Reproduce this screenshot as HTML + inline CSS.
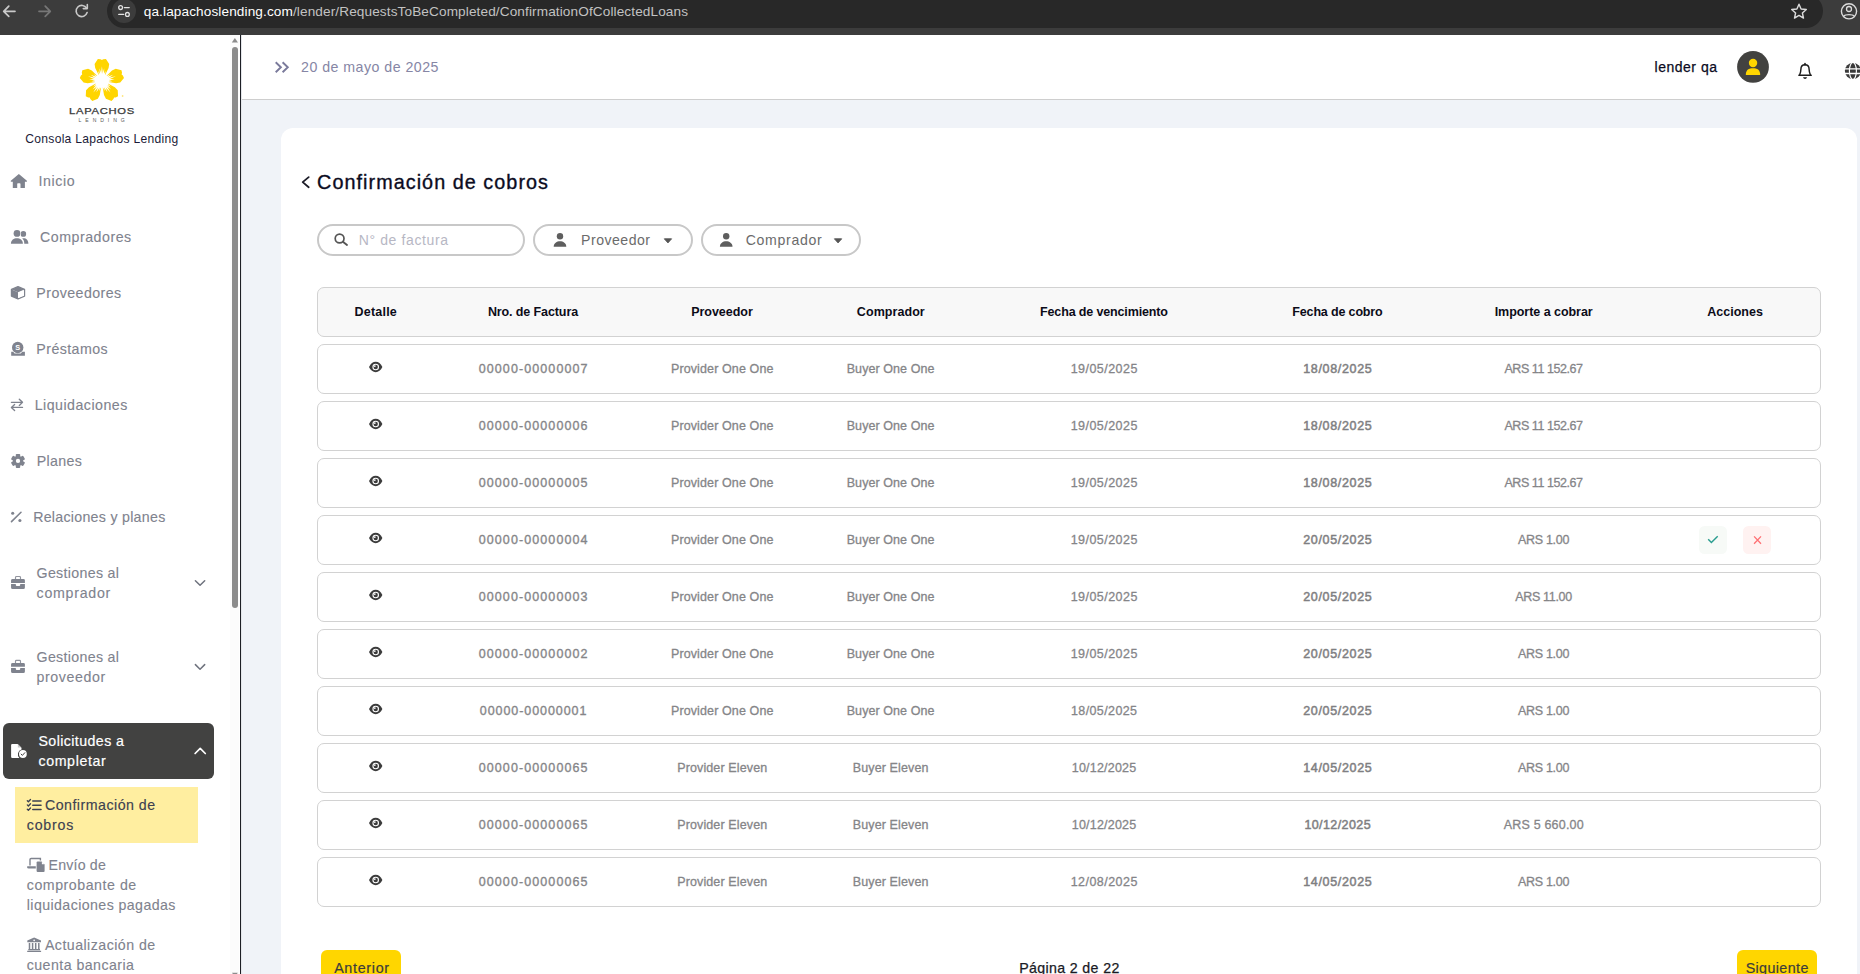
<!DOCTYPE html>
<html lang="es">
<head>
<meta charset="utf-8">
<title>Confirmación de cobros</title>
<style>
*{box-sizing:border-box;margin:0;padding:0}
html,body{width:1860px;height:974px;overflow:hidden}
body{position:relative;background:#f0f3f8;font-family:"Liberation Sans",sans-serif}
.t{position:absolute;white-space:pre;display:block}
.b{position:absolute;display:block}
svg{position:absolute;display:block;overflow:visible}
.row{position:absolute;left:317px;width:1504px;height:50px;border:1px solid #d2d2d2;border-radius:7px;background:#fff}
</style>
</head>
<body>
<div class="b" style="left:0;top:0;width:1860px;height:35px;background:#3c3c3c"></div>
<div class="b" style="left:107px;top:-6px;width:1716px;height:34px;border-radius:17px;background:#282828"></div>
<div class="b" style="left:112px;top:-1px;width:24px;height:24px;border-radius:12px;background:#3c3c3c"></div>
<svg style="left:0;top:0" width="1860" height="35" viewBox="0 0 1860 35" fill="none" stroke-linecap="round" stroke-linejoin="round">
<path d="M15 11.3H3.9M8.8 6.2L3.7 11.3L8.8 16.4" stroke="#c9c9c9" stroke-width="1.7"/>
<path d="M39 11.3H50.1M45.2 6.2L50.3 11.3L45.2 16.4" stroke="#777" stroke-width="1.7"/>
<path d="M86.6 8.2A5.6 5.6 0 1 0 87.1 12.6" stroke="#c9c9c9" stroke-width="1.6"/>
<path d="M87.3 4.6V8.6H83.3" stroke="#c9c9c9" stroke-width="1.6"/>
<circle cx="120.6" cy="7.6" r="1.9" stroke="#e3e3e3" stroke-width="1.3"/><path d="M124.4 7.6H129.2" stroke="#e3e3e3" stroke-width="1.4"/>
<circle cx="127.4" cy="14.4" r="1.9" stroke="#e3e3e3" stroke-width="1.3"/><path d="M118.8 14.4H123.6" stroke="#e3e3e3" stroke-width="1.4"/>
<path d="M1799 4.2L1801.1 9L1806.3 9.5L1802.4 13L1803.5 18.1L1799 15.4L1794.5 18.1L1795.6 13L1791.7 9.5L1796.9 9Z" stroke="#dcdcdc" stroke-width="1.4"/>
<circle cx="1849" cy="11.3" r="7.6" stroke="#dcdcdc" stroke-width="1.4"/>
<circle cx="1849" cy="9" r="2.5" stroke="#dcdcdc" stroke-width="1.3"/>
<path d="M1843.6 16.3C1845.3 14.2 1852.7 14.2 1854.4 16.3" stroke="#dcdcdc" stroke-width="1.3"/>
</svg>
<span class="t" style="left:143.78px;top:2.19px;font-size:13.60px;line-height:20px;color:#c2c2c2;letter-spacing:0.117px;"><span style="color:#fff">qa.lapachoslending.com</span>/lender/RequestsToBeCompleted/ConfirmationOfCollectedLoans</span>
<div class="b" style="left:0;top:35px;width:240px;height:939px;background:#fff"></div>
<div class="b" style="left:230px;top:35px;width:9px;height:939px;background:#fcfcfc"></div>
<div class="b" style="left:232px;top:47px;width:6px;height:561px;border-radius:3px;background:#8c8c8c"></div>
<svg style="left:230px;top:35px" width="10" height="939" viewBox="0 0 10 939"><path d="M1.8 7.4L4.9 3L8 7.4Z" fill="#8c8c8c"/><path d="M2 937.8L4.9 942L7.8 937.8Z" fill="#8c8c8c"/></svg>
<div class="b" style="left:240px;top:35px;width:1px;height:939px;background:#1d1f25"></div>
<div class="b" style="left:241px;top:35px;width:1px;height:939px;background:#e4e6ea;z-index:3"></div>
<div class="b" style="left:241px;top:35px;width:1619px;height:65px;background:#fff;border-bottom:1px solid #cecece"></div>
<svg style="left:241px;top:35px" width="1619" height="64" viewBox="241 35 1619 64" fill="none" stroke-linecap="round" stroke-linejoin="round">
<path d="M275.7 62.2L280.9 67.2L275.7 72.2M282.6 62.2L287.8 67.2L282.6 72.2" stroke="#7a7a9b" stroke-width="1.9" stroke-linecap="butt" stroke-linejoin="miter"/>
<circle cx="1753" cy="66.9" r="15.9" fill="#424240"/>
<circle cx="1753.05" cy="62.95" r="4.2" fill="#ffd600"/>
<path d="M1745.8 75C1745.8 69.6 1749 68.3 1753 68.3C1757 68.3 1760.2 69.6 1760.2 75Z" fill="#ffd600"/>
</svg>
<span class="t" style="left:301.05px;top:56.88px;font-size:14.20px;line-height:20px;color:#8686a5;letter-spacing:0.472px;">20 de mayo de 2025</span>
<span class="t" style="left:1654.56px;top:56.85px;font-size:14.00px;line-height:20px;color:#0b0b1e;-webkit-text-stroke:0.25px #0b0b1e;letter-spacing:0.511px;">lender qa</span>
<div class="b" style="left:281px;top:128px;width:1576px;height:900px;background:#fff;border-radius:12px"></div>
<svg style="left:281px;top:128px" width="1574" height="846" viewBox="281 128 1574 846" fill="none" stroke-linecap="round" stroke-linejoin="round">
<path d="M308.7 177.1L302.7 182.15L308.7 187.2" stroke="#1c1c28" stroke-width="1.8"/>
</svg>
<span class="t" style="left:317.11px;top:172.14px;font-size:19.80px;line-height:20px;color:#0b0b1e;-webkit-text-stroke:0.35px #0b0b1e;letter-spacing:1.046px;">Confirmación de cobros</span>
<div class="b" style="left:317px;top:224px;width:208px;height:32px;border:2px solid #c8c8c8;border-radius:16px;background:#fff"></div>
<div class="b" style="left:533px;top:224px;width:160px;height:32px;border:2px solid #c8c8c8;border-radius:16px;background:#fff"></div>
<div class="b" style="left:701px;top:224px;width:160px;height:32px;border:2px solid #c8c8c8;border-radius:16px;background:#fff"></div>
<span class="t" style="left:358.66px;top:229.95px;font-size:14.00px;line-height:20px;color:#b7b7c4;letter-spacing:0.634px;">N° de factura</span>
<span class="t" style="left:581.05px;top:230.01px;font-size:14.10px;line-height:20px;color:#6b6b6b;letter-spacing:0.495px;">Proveedor</span>
<span class="t" style="left:745.75px;top:230.01px;font-size:14.10px;line-height:20px;color:#6b6b6b;letter-spacing:0.674px;">Comprador</span>
<div class="row" style="top:287px;background:#f8f8f8"></div>
<span class="t" style="left:354.60px;top:301.67px;font-size:12.50px;line-height:20px;color:#0c0c18;font-weight:bold;letter-spacing:0.200px;">Detalle</span>
<span class="t" style="left:487.90px;top:301.67px;font-size:12.50px;line-height:20px;color:#0c0c18;font-weight:bold;letter-spacing:-0.106px;">Nro. de Factura</span>
<span class="t" style="left:691.20px;top:301.67px;font-size:12.50px;line-height:20px;color:#0c0c18;font-weight:bold;letter-spacing:-0.030px;">Proveedor</span>
<span class="t" style="left:856.85px;top:301.67px;font-size:12.50px;line-height:20px;color:#0c0c18;font-weight:bold;letter-spacing:0.066px;">Comprador</span>
<span class="t" style="left:1040.05px;top:301.67px;font-size:12.50px;line-height:20px;color:#0c0c18;font-weight:bold;letter-spacing:-0.143px;">Fecha de vencimiento</span>
<span class="t" style="left:1292.30px;top:301.67px;font-size:12.50px;line-height:20px;color:#0c0c18;font-weight:bold;letter-spacing:-0.153px;">Fecha de cobro</span>
<span class="t" style="left:1494.70px;top:301.67px;font-size:12.50px;line-height:20px;color:#0c0c18;font-weight:bold;letter-spacing:-0.043px;">Importe a cobrar</span>
<span class="t" style="left:1707.25px;top:301.67px;font-size:12.50px;line-height:20px;color:#0c0c18;font-weight:bold;letter-spacing:0.015px;">Acciones</span>
<div class="row" style="top:344px"></div>
<svg style="left:368.7px;top:360.8px" width="14" height="12" viewBox="0 -6 14 12"><path d="M0 0C1.6 -3.4 4 -5.2 6.7 -5.2C9.4 -5.2 11.8 -3.4 13.4 0C11.8 3.4 9.4 5.2 6.7 5.2C4 5.2 1.6 3.4 0 0Z" fill="#3c3c3c"/><circle cx="6.7" cy="0" r="3.3" fill="#fff"/><circle cx="6.7" cy="0" r="2.2" fill="#3c3c3c"/><circle cx="5.8" cy="-0.9" r="0.9" fill="#fff"/></svg>
<span class="t" style="left:478.70px;top:358.67px;font-size:12.50px;line-height:20px;color:#858588;-webkit-text-stroke:0.35px #858588;letter-spacing:1.096px;">00000-00000007</span>
<span class="t" style="left:670.95px;top:358.67px;font-size:12.50px;line-height:20px;color:#858588;-webkit-text-stroke:0.30px #858588;letter-spacing:0.117px;">Provider One One</span>
<span class="t" style="left:846.70px;top:358.67px;font-size:12.50px;line-height:20px;color:#858588;-webkit-text-stroke:0.30px #858588;letter-spacing:0.078px;">Buyer One One</span>
<span class="t" style="left:1070.65px;top:358.67px;font-size:12.50px;line-height:20px;color:#858588;-webkit-text-stroke:0.30px #858588;letter-spacing:0.460px;">19/05/2025</span>
<span class="t" style="left:1303.25px;top:358.67px;font-size:12.50px;line-height:20px;color:#7f7f82;-webkit-text-stroke:0.50px #7f7f82;letter-spacing:0.660px;">18/08/2025</span>
<span class="t" style="left:1504.40px;top:358.67px;font-size:12.50px;line-height:20px;color:#858588;-webkit-text-stroke:0.30px #858588;letter-spacing:-0.438px;">ARS 11 152.67</span>
<div class="row" style="top:401px"></div>
<svg style="left:368.7px;top:417.8px" width="14" height="12" viewBox="0 -6 14 12"><path d="M0 0C1.6 -3.4 4 -5.2 6.7 -5.2C9.4 -5.2 11.8 -3.4 13.4 0C11.8 3.4 9.4 5.2 6.7 5.2C4 5.2 1.6 3.4 0 0Z" fill="#3c3c3c"/><circle cx="6.7" cy="0" r="3.3" fill="#fff"/><circle cx="6.7" cy="0" r="2.2" fill="#3c3c3c"/><circle cx="5.8" cy="-0.9" r="0.9" fill="#fff"/></svg>
<span class="t" style="left:478.70px;top:415.67px;font-size:12.50px;line-height:20px;color:#858588;-webkit-text-stroke:0.35px #858588;letter-spacing:1.096px;">00000-00000006</span>
<span class="t" style="left:670.95px;top:415.67px;font-size:12.50px;line-height:20px;color:#858588;-webkit-text-stroke:0.30px #858588;letter-spacing:0.117px;">Provider One One</span>
<span class="t" style="left:846.70px;top:415.67px;font-size:12.50px;line-height:20px;color:#858588;-webkit-text-stroke:0.30px #858588;letter-spacing:0.078px;">Buyer One One</span>
<span class="t" style="left:1070.65px;top:415.67px;font-size:12.50px;line-height:20px;color:#858588;-webkit-text-stroke:0.30px #858588;letter-spacing:0.460px;">19/05/2025</span>
<span class="t" style="left:1303.25px;top:415.67px;font-size:12.50px;line-height:20px;color:#7f7f82;-webkit-text-stroke:0.50px #7f7f82;letter-spacing:0.660px;">18/08/2025</span>
<span class="t" style="left:1504.40px;top:415.67px;font-size:12.50px;line-height:20px;color:#858588;-webkit-text-stroke:0.30px #858588;letter-spacing:-0.438px;">ARS 11 152.67</span>
<div class="row" style="top:458px"></div>
<svg style="left:368.7px;top:474.8px" width="14" height="12" viewBox="0 -6 14 12"><path d="M0 0C1.6 -3.4 4 -5.2 6.7 -5.2C9.4 -5.2 11.8 -3.4 13.4 0C11.8 3.4 9.4 5.2 6.7 5.2C4 5.2 1.6 3.4 0 0Z" fill="#3c3c3c"/><circle cx="6.7" cy="0" r="3.3" fill="#fff"/><circle cx="6.7" cy="0" r="2.2" fill="#3c3c3c"/><circle cx="5.8" cy="-0.9" r="0.9" fill="#fff"/></svg>
<span class="t" style="left:478.70px;top:472.67px;font-size:12.50px;line-height:20px;color:#858588;-webkit-text-stroke:0.35px #858588;letter-spacing:1.096px;">00000-00000005</span>
<span class="t" style="left:670.95px;top:472.67px;font-size:12.50px;line-height:20px;color:#858588;-webkit-text-stroke:0.30px #858588;letter-spacing:0.117px;">Provider One One</span>
<span class="t" style="left:846.70px;top:472.67px;font-size:12.50px;line-height:20px;color:#858588;-webkit-text-stroke:0.30px #858588;letter-spacing:0.078px;">Buyer One One</span>
<span class="t" style="left:1070.65px;top:472.67px;font-size:12.50px;line-height:20px;color:#858588;-webkit-text-stroke:0.30px #858588;letter-spacing:0.460px;">19/05/2025</span>
<span class="t" style="left:1303.25px;top:472.67px;font-size:12.50px;line-height:20px;color:#7f7f82;-webkit-text-stroke:0.50px #7f7f82;letter-spacing:0.660px;">18/08/2025</span>
<span class="t" style="left:1504.40px;top:472.67px;font-size:12.50px;line-height:20px;color:#858588;-webkit-text-stroke:0.30px #858588;letter-spacing:-0.438px;">ARS 11 152.67</span>
<div class="row" style="top:515px"></div>
<svg style="left:368.7px;top:531.8px" width="14" height="12" viewBox="0 -6 14 12"><path d="M0 0C1.6 -3.4 4 -5.2 6.7 -5.2C9.4 -5.2 11.8 -3.4 13.4 0C11.8 3.4 9.4 5.2 6.7 5.2C4 5.2 1.6 3.4 0 0Z" fill="#3c3c3c"/><circle cx="6.7" cy="0" r="3.3" fill="#fff"/><circle cx="6.7" cy="0" r="2.2" fill="#3c3c3c"/><circle cx="5.8" cy="-0.9" r="0.9" fill="#fff"/></svg>
<span class="t" style="left:478.70px;top:529.67px;font-size:12.50px;line-height:20px;color:#858588;-webkit-text-stroke:0.35px #858588;letter-spacing:1.096px;">00000-00000004</span>
<span class="t" style="left:670.95px;top:529.67px;font-size:12.50px;line-height:20px;color:#858588;-webkit-text-stroke:0.30px #858588;letter-spacing:0.117px;">Provider One One</span>
<span class="t" style="left:846.70px;top:529.67px;font-size:12.50px;line-height:20px;color:#858588;-webkit-text-stroke:0.30px #858588;letter-spacing:0.078px;">Buyer One One</span>
<span class="t" style="left:1070.65px;top:529.67px;font-size:12.50px;line-height:20px;color:#858588;-webkit-text-stroke:0.30px #858588;letter-spacing:0.460px;">19/05/2025</span>
<span class="t" style="left:1303.25px;top:529.67px;font-size:12.50px;line-height:20px;color:#7f7f82;-webkit-text-stroke:0.50px #7f7f82;letter-spacing:0.660px;">20/05/2025</span>
<span class="t" style="left:1518.00px;top:529.67px;font-size:12.50px;line-height:20px;color:#858588;-webkit-text-stroke:0.30px #858588;letter-spacing:-0.302px;">ARS 1.00</span>
<div class="row" style="top:572px"></div>
<svg style="left:368.7px;top:588.8px" width="14" height="12" viewBox="0 -6 14 12"><path d="M0 0C1.6 -3.4 4 -5.2 6.7 -5.2C9.4 -5.2 11.8 -3.4 13.4 0C11.8 3.4 9.4 5.2 6.7 5.2C4 5.2 1.6 3.4 0 0Z" fill="#3c3c3c"/><circle cx="6.7" cy="0" r="3.3" fill="#fff"/><circle cx="6.7" cy="0" r="2.2" fill="#3c3c3c"/><circle cx="5.8" cy="-0.9" r="0.9" fill="#fff"/></svg>
<span class="t" style="left:478.70px;top:586.67px;font-size:12.50px;line-height:20px;color:#858588;-webkit-text-stroke:0.35px #858588;letter-spacing:1.096px;">00000-00000003</span>
<span class="t" style="left:670.95px;top:586.67px;font-size:12.50px;line-height:20px;color:#858588;-webkit-text-stroke:0.30px #858588;letter-spacing:0.117px;">Provider One One</span>
<span class="t" style="left:846.70px;top:586.67px;font-size:12.50px;line-height:20px;color:#858588;-webkit-text-stroke:0.30px #858588;letter-spacing:0.078px;">Buyer One One</span>
<span class="t" style="left:1070.65px;top:586.67px;font-size:12.50px;line-height:20px;color:#858588;-webkit-text-stroke:0.30px #858588;letter-spacing:0.460px;">19/05/2025</span>
<span class="t" style="left:1303.25px;top:586.67px;font-size:12.50px;line-height:20px;color:#7f7f82;-webkit-text-stroke:0.50px #7f7f82;letter-spacing:0.660px;">20/05/2025</span>
<span class="t" style="left:1515.20px;top:586.67px;font-size:12.50px;line-height:20px;color:#858588;-webkit-text-stroke:0.30px #858588;letter-spacing:-0.316px;">ARS 11.00</span>
<div class="row" style="top:629px"></div>
<svg style="left:368.7px;top:645.8px" width="14" height="12" viewBox="0 -6 14 12"><path d="M0 0C1.6 -3.4 4 -5.2 6.7 -5.2C9.4 -5.2 11.8 -3.4 13.4 0C11.8 3.4 9.4 5.2 6.7 5.2C4 5.2 1.6 3.4 0 0Z" fill="#3c3c3c"/><circle cx="6.7" cy="0" r="3.3" fill="#fff"/><circle cx="6.7" cy="0" r="2.2" fill="#3c3c3c"/><circle cx="5.8" cy="-0.9" r="0.9" fill="#fff"/></svg>
<span class="t" style="left:478.70px;top:643.67px;font-size:12.50px;line-height:20px;color:#858588;-webkit-text-stroke:0.35px #858588;letter-spacing:1.096px;">00000-00000002</span>
<span class="t" style="left:670.95px;top:643.67px;font-size:12.50px;line-height:20px;color:#858588;-webkit-text-stroke:0.30px #858588;letter-spacing:0.117px;">Provider One One</span>
<span class="t" style="left:846.70px;top:643.67px;font-size:12.50px;line-height:20px;color:#858588;-webkit-text-stroke:0.30px #858588;letter-spacing:0.078px;">Buyer One One</span>
<span class="t" style="left:1070.65px;top:643.67px;font-size:12.50px;line-height:20px;color:#858588;-webkit-text-stroke:0.30px #858588;letter-spacing:0.460px;">19/05/2025</span>
<span class="t" style="left:1303.25px;top:643.67px;font-size:12.50px;line-height:20px;color:#7f7f82;-webkit-text-stroke:0.50px #7f7f82;letter-spacing:0.660px;">20/05/2025</span>
<span class="t" style="left:1518.00px;top:643.67px;font-size:12.50px;line-height:20px;color:#858588;-webkit-text-stroke:0.30px #858588;letter-spacing:-0.302px;">ARS 1.00</span>
<div class="row" style="top:686px"></div>
<svg style="left:368.7px;top:702.8px" width="14" height="12" viewBox="0 -6 14 12"><path d="M0 0C1.6 -3.4 4 -5.2 6.7 -5.2C9.4 -5.2 11.8 -3.4 13.4 0C11.8 3.4 9.4 5.2 6.7 5.2C4 5.2 1.6 3.4 0 0Z" fill="#3c3c3c"/><circle cx="6.7" cy="0" r="3.3" fill="#fff"/><circle cx="6.7" cy="0" r="2.2" fill="#3c3c3c"/><circle cx="5.8" cy="-0.9" r="0.9" fill="#fff"/></svg>
<span class="t" style="left:479.75px;top:700.67px;font-size:12.50px;line-height:20px;color:#858588;-webkit-text-stroke:0.35px #858588;letter-spacing:0.935px;">00000-00000001</span>
<span class="t" style="left:670.95px;top:700.67px;font-size:12.50px;line-height:20px;color:#858588;-webkit-text-stroke:0.30px #858588;letter-spacing:0.117px;">Provider One One</span>
<span class="t" style="left:846.70px;top:700.67px;font-size:12.50px;line-height:20px;color:#858588;-webkit-text-stroke:0.30px #858588;letter-spacing:0.078px;">Buyer One One</span>
<span class="t" style="left:1070.95px;top:700.67px;font-size:12.50px;line-height:20px;color:#858588;-webkit-text-stroke:0.30px #858588;letter-spacing:0.393px;">18/05/2025</span>
<span class="t" style="left:1303.25px;top:700.67px;font-size:12.50px;line-height:20px;color:#7f7f82;-webkit-text-stroke:0.50px #7f7f82;letter-spacing:0.660px;">20/05/2025</span>
<span class="t" style="left:1518.00px;top:700.67px;font-size:12.50px;line-height:20px;color:#858588;-webkit-text-stroke:0.30px #858588;letter-spacing:-0.302px;">ARS 1.00</span>
<div class="row" style="top:743px"></div>
<svg style="left:368.7px;top:759.8px" width="14" height="12" viewBox="0 -6 14 12"><path d="M0 0C1.6 -3.4 4 -5.2 6.7 -5.2C9.4 -5.2 11.8 -3.4 13.4 0C11.8 3.4 9.4 5.2 6.7 5.2C4 5.2 1.6 3.4 0 0Z" fill="#3c3c3c"/><circle cx="6.7" cy="0" r="3.3" fill="#fff"/><circle cx="6.7" cy="0" r="2.2" fill="#3c3c3c"/><circle cx="5.8" cy="-0.9" r="0.9" fill="#fff"/></svg>
<span class="t" style="left:478.70px;top:757.67px;font-size:12.50px;line-height:20px;color:#858588;-webkit-text-stroke:0.35px #858588;letter-spacing:1.096px;">00000-00000065</span>
<span class="t" style="left:677.20px;top:757.67px;font-size:12.50px;line-height:20px;color:#858588;-webkit-text-stroke:0.30px #858588;letter-spacing:0.125px;">Provider Eleven</span>
<span class="t" style="left:852.75px;top:757.67px;font-size:12.50px;line-height:20px;color:#858588;-webkit-text-stroke:0.30px #858588;letter-spacing:0.122px;">Buyer Eleven</span>
<span class="t" style="left:1071.80px;top:757.67px;font-size:12.50px;line-height:20px;color:#858588;-webkit-text-stroke:0.30px #858588;letter-spacing:0.204px;">10/12/2025</span>
<span class="t" style="left:1303.25px;top:757.67px;font-size:12.50px;line-height:20px;color:#7f7f82;-webkit-text-stroke:0.50px #7f7f82;letter-spacing:0.660px;">14/05/2025</span>
<span class="t" style="left:1518.00px;top:757.67px;font-size:12.50px;line-height:20px;color:#858588;-webkit-text-stroke:0.30px #858588;letter-spacing:-0.302px;">ARS 1.00</span>
<div class="row" style="top:800px"></div>
<svg style="left:368.7px;top:816.8px" width="14" height="12" viewBox="0 -6 14 12"><path d="M0 0C1.6 -3.4 4 -5.2 6.7 -5.2C9.4 -5.2 11.8 -3.4 13.4 0C11.8 3.4 9.4 5.2 6.7 5.2C4 5.2 1.6 3.4 0 0Z" fill="#3c3c3c"/><circle cx="6.7" cy="0" r="3.3" fill="#fff"/><circle cx="6.7" cy="0" r="2.2" fill="#3c3c3c"/><circle cx="5.8" cy="-0.9" r="0.9" fill="#fff"/></svg>
<span class="t" style="left:478.70px;top:814.67px;font-size:12.50px;line-height:20px;color:#858588;-webkit-text-stroke:0.35px #858588;letter-spacing:1.096px;">00000-00000065</span>
<span class="t" style="left:677.20px;top:814.67px;font-size:12.50px;line-height:20px;color:#858588;-webkit-text-stroke:0.30px #858588;letter-spacing:0.125px;">Provider Eleven</span>
<span class="t" style="left:852.75px;top:814.67px;font-size:12.50px;line-height:20px;color:#858588;-webkit-text-stroke:0.30px #858588;letter-spacing:0.122px;">Buyer Eleven</span>
<span class="t" style="left:1071.80px;top:814.67px;font-size:12.50px;line-height:20px;color:#858588;-webkit-text-stroke:0.30px #858588;letter-spacing:0.204px;">10/12/2025</span>
<span class="t" style="left:1304.40px;top:814.67px;font-size:12.50px;line-height:20px;color:#7f7f82;-webkit-text-stroke:0.50px #7f7f82;letter-spacing:0.404px;">10/12/2025</span>
<span class="t" style="left:1503.70px;top:814.67px;font-size:12.50px;line-height:20px;color:#858588;-webkit-text-stroke:0.30px #858588;letter-spacing:0.196px;">ARS 5 660.00</span>
<div class="row" style="top:857px"></div>
<svg style="left:368.7px;top:873.8px" width="14" height="12" viewBox="0 -6 14 12"><path d="M0 0C1.6 -3.4 4 -5.2 6.7 -5.2C9.4 -5.2 11.8 -3.4 13.4 0C11.8 3.4 9.4 5.2 6.7 5.2C4 5.2 1.6 3.4 0 0Z" fill="#3c3c3c"/><circle cx="6.7" cy="0" r="3.3" fill="#fff"/><circle cx="6.7" cy="0" r="2.2" fill="#3c3c3c"/><circle cx="5.8" cy="-0.9" r="0.9" fill="#fff"/></svg>
<span class="t" style="left:478.70px;top:871.67px;font-size:12.50px;line-height:20px;color:#858588;-webkit-text-stroke:0.35px #858588;letter-spacing:1.096px;">00000-00000065</span>
<span class="t" style="left:677.20px;top:871.67px;font-size:12.50px;line-height:20px;color:#858588;-webkit-text-stroke:0.30px #858588;letter-spacing:0.125px;">Provider Eleven</span>
<span class="t" style="left:852.75px;top:871.67px;font-size:12.50px;line-height:20px;color:#858588;-webkit-text-stroke:0.30px #858588;letter-spacing:0.122px;">Buyer Eleven</span>
<span class="t" style="left:1070.65px;top:871.67px;font-size:12.50px;line-height:20px;color:#858588;-webkit-text-stroke:0.30px #858588;letter-spacing:0.460px;">12/08/2025</span>
<span class="t" style="left:1303.25px;top:871.67px;font-size:12.50px;line-height:20px;color:#7f7f82;-webkit-text-stroke:0.50px #7f7f82;letter-spacing:0.660px;">14/05/2025</span>
<span class="t" style="left:1518.00px;top:871.67px;font-size:12.50px;line-height:20px;color:#858588;-webkit-text-stroke:0.30px #858588;letter-spacing:-0.302px;">ARS 1.00</span>
<div class="b" style="left:1699.2px;top:526px;width:27.5px;height:27.7px;border-radius:5.5px;background:#f7faf7"></div>
<div class="b" style="left:1743.2px;top:526px;width:27.5px;height:27.7px;border-radius:5.5px;background:#fff2f1"></div>
<svg style="left:1699px;top:526px" width="72" height="28" viewBox="1699 526 72 28" fill="none" stroke-linecap="butt" stroke-linejoin="miter">
<path d="M1708.2 539.3L1711.4 542.5L1717.7 536.3" stroke="#2a9d8f" stroke-width="1.45"/>
<path d="M1754.1 536.4L1761 543.7M1761 536.4L1754.1 543.7" stroke="#ff6f72" stroke-width="1.3"/>
</svg>
<div class="b" style="left:321px;top:950px;width:80px;height:40px;border-radius:6px;background:#ffd600"></div>
<div class="b" style="left:1737px;top:950px;width:80px;height:40px;border-radius:6px;background:#ffd600"></div>
<span class="t" style="left:334.14px;top:957.85px;font-size:14.30px;line-height:20px;color:#3c3c3c;-webkit-text-stroke:0.20px #3c3c3c;letter-spacing:0.693px;">Anterior</span>
<span class="t" style="left:1745.64px;top:957.85px;font-size:14.30px;line-height:20px;color:#3c3c3c;-webkit-text-stroke:0.20px #3c3c3c;letter-spacing:0.386px;">Siguiente</span>
<span class="t" style="left:1019.15px;top:957.58px;font-size:14.20px;line-height:20px;color:#1a1a24;-webkit-text-stroke:0.25px #1a1a24;letter-spacing:0.364px;">Página 2 de 22</span>
<svg style="left:70px;top:52px" width="64" height="56" viewBox="70 52 64 56"><polygon points="100.70,78.80 98.70,75.00 95.20,68.00 94.60,63.90 97.85,58.90 100.50,59.20 101.90,60.10 103.30,59.20 105.95,58.90 109.20,63.90 108.60,68.00 105.10,75.00 103.10,78.80" fill="#ffd500"/><polygon points="103.43,79.04 106.43,75.96 112.00,70.47 115.72,68.63 121.48,70.18 122.01,72.79 121.59,74.40 122.88,75.46 123.98,77.88 120.23,82.52 116.14,83.22 108.40,82.05 104.17,81.32" fill="#ffd500"/><polygon points="104.05,81.71 107.90,83.61 114.84,87.22 117.74,90.18 118.05,96.14 115.73,97.45 114.07,97.55 113.46,99.10 111.50,100.90 105.93,98.76 104.00,95.09 102.72,87.37 102.10,83.12" fill="#ffd500"/><polygon points="101.70,83.12 101.08,87.37 99.80,95.09 97.87,98.76 92.30,100.90 90.34,99.10 89.73,97.55 88.07,97.45 85.75,96.14 86.06,90.18 88.96,87.22 95.90,83.61 99.75,81.71" fill="#ffd500"/><polygon points="99.63,81.32 95.40,82.05 87.66,83.22 83.57,82.52 79.82,77.88 80.92,75.46 82.21,74.40 81.79,72.79 82.32,70.18 88.08,68.63 91.80,70.47 97.37,75.96 100.37,79.04" fill="#ffd500"/><polygon points="99.30,77.51 101.63,76.62 98.14,71.00" fill="#fff"/><polygon points="99.94,77.09 102.40,76.64 99.57,68.21" fill="#fff"/><polygon points="100.65,76.80 103.15,76.80 101.90,66.20" fill="#fff"/><polygon points="101.40,76.64 103.86,77.09 104.23,68.21" fill="#fff"/><polygon points="102.17,76.62 104.50,77.51 105.66,71.00" fill="#fff"/><polygon points="104.22,77.31 105.80,79.25 110.06,74.19" fill="#fff"/><polygon points="104.82,77.79 106.01,79.99 113.15,74.69" fill="#fff"/><polygon points="105.32,78.38 106.09,80.75 115.79,76.29" fill="#fff"/><polygon points="105.70,79.04 106.03,81.52 114.59,79.13" fill="#fff"/><polygon points="105.96,79.76 105.83,82.26 112.39,81.35" fill="#fff"/><polygon points="105.94,81.93 104.57,84.03 110.71,86.52" fill="#fff"/><polygon points="105.66,82.65 103.94,84.46 111.18,89.61" fill="#fff"/><polygon points="105.26,83.30 103.24,84.77 110.48,92.61" fill="#fff"/><polygon points="104.75,83.87 102.49,84.95 107.41,92.35" fill="#fff"/><polygon points="104.14,84.34 101.73,84.99 104.62,90.94" fill="#fff"/><polygon points="102.07,84.99 99.66,84.34 99.18,90.94" fill="#fff"/><polygon points="101.31,84.95 99.05,83.87 96.39,92.35" fill="#fff"/><polygon points="100.56,84.77 98.54,83.30 93.32,92.61" fill="#fff"/><polygon points="99.86,84.46 98.14,82.65 92.62,89.61" fill="#fff"/><polygon points="99.23,84.03 97.86,81.93 93.09,86.52" fill="#fff"/><polygon points="97.97,82.26 97.84,79.76 91.41,81.35" fill="#fff"/><polygon points="97.77,81.52 98.10,79.04 89.21,79.13" fill="#fff"/><polygon points="97.71,80.75 98.48,78.38 88.01,76.29" fill="#fff"/><polygon points="97.79,79.99 98.98,77.79 90.65,74.69" fill="#fff"/><polygon points="98.00,79.25 99.58,77.31 93.74,74.19" fill="#fff"/><circle cx="101.9" cy="80.8" r="7" fill="#fff"/><circle cx="122.6" cy="96" r="0.9" fill="#ffe680"/></svg>
<span class="t" style="left:69.41px;top:101.54px;font-size:8.25px;line-height:20px;color:#3a3a3a;-webkit-text-stroke:0.25px #3a3a3a;letter-spacing:0.521px;transform:scaleX(1.360);transform-origin:0 0;">LAPACHOS</span>
<span class="t" style="left:78.59px;top:110.13px;font-size:5.10px;line-height:20px;color:#5a5a5a;letter-spacing:3.909px;">LENDING</span>
<span class="t" style="left:25.37px;top:128.61px;font-size:12.10px;line-height:20px;color:#1b1b38;letter-spacing:0.268px;">Consola Lapachos Lending</span>
<span class="t" style="left:38.45px;top:171.08px;font-size:14.20px;line-height:20px;color:#7f838e;-webkit-text-stroke:0.12px #7f838e;letter-spacing:0.596px;">Inicio</span>
<span class="t" style="left:40.05px;top:227.08px;font-size:14.20px;line-height:20px;color:#7f838e;-webkit-text-stroke:0.12px #7f838e;letter-spacing:0.515px;">Compradores</span>
<span class="t" style="left:36.35px;top:283.08px;font-size:14.20px;line-height:20px;color:#7f838e;-webkit-text-stroke:0.12px #7f838e;letter-spacing:0.435px;">Proveedores</span>
<span class="t" style="left:36.35px;top:339.08px;font-size:14.20px;line-height:20px;color:#7f838e;-webkit-text-stroke:0.12px #7f838e;letter-spacing:0.424px;">Préstamos</span>
<span class="t" style="left:34.75px;top:395.08px;font-size:14.20px;line-height:20px;color:#7f838e;-webkit-text-stroke:0.12px #7f838e;letter-spacing:0.477px;">Liquidaciones</span>
<span class="t" style="left:36.65px;top:451.08px;font-size:14.20px;line-height:20px;color:#7f838e;-webkit-text-stroke:0.12px #7f838e;letter-spacing:0.363px;">Planes</span>
<span class="t" style="left:33.15px;top:507.08px;font-size:14.20px;line-height:20px;color:#7f838e;-webkit-text-stroke:0.12px #7f838e;letter-spacing:0.284px;">Relaciones y planes</span>
<span class="t" style="left:36.55px;top:563.08px;font-size:14.20px;line-height:20px;color:#7f838e;-webkit-text-stroke:0.12px #7f838e;letter-spacing:0.321px;">Gestiones al</span>
<span class="t" style="left:36.55px;top:582.88px;font-size:14.20px;line-height:20px;color:#7f838e;-webkit-text-stroke:0.12px #7f838e;letter-spacing:0.747px;">comprador</span>
<span class="t" style="left:36.55px;top:646.98px;font-size:14.20px;line-height:20px;color:#7f838e;-webkit-text-stroke:0.12px #7f838e;letter-spacing:0.321px;">Gestiones al</span>
<span class="t" style="left:36.55px;top:666.68px;font-size:14.20px;line-height:20px;color:#7f838e;-webkit-text-stroke:0.12px #7f838e;letter-spacing:0.602px;">proveedor</span>
<div class="b" style="left:3px;top:723px;width:211px;height:56px;border-radius:6px;background:#424241"></div>
<span class="t" style="left:38.45px;top:730.98px;font-size:14.20px;line-height:20px;color:#fff;-webkit-text-stroke:0.20px #fff;letter-spacing:0.421px;">Solicitudes a</span>
<span class="t" style="left:38.45px;top:751.08px;font-size:14.20px;line-height:20px;color:#fff;-webkit-text-stroke:0.20px #fff;letter-spacing:0.626px;">completar</span>
<div class="b" style="left:15px;top:787px;width:183px;height:56px;background:#ffeea0"></div>
<span class="t" style="left:44.95px;top:795.08px;font-size:14.20px;line-height:20px;color:#3d4150;-webkit-text-stroke:0.15px #3d4150;letter-spacing:0.492px;">Confirmación de</span>
<span class="t" style="left:26.85px;top:815.08px;font-size:14.20px;line-height:20px;color:#3d4150;-webkit-text-stroke:0.15px #3d4150;letter-spacing:0.762px;">cobros</span>
<span class="t" style="left:48.55px;top:854.88px;font-size:14.20px;line-height:20px;color:#7f838e;-webkit-text-stroke:0.12px #7f838e;letter-spacing:0.184px;">Envío de</span>
<span class="t" style="left:26.75px;top:874.68px;font-size:14.20px;line-height:20px;color:#7f838e;-webkit-text-stroke:0.12px #7f838e;letter-spacing:0.535px;">comprobante de</span>
<span class="t" style="left:26.75px;top:894.58px;font-size:14.20px;line-height:20px;color:#7f838e;-webkit-text-stroke:0.12px #7f838e;letter-spacing:0.414px;">liquidaciones pagadas</span>
<span class="t" style="left:44.95px;top:934.68px;font-size:14.20px;line-height:20px;color:#7f838e;-webkit-text-stroke:0.12px #7f838e;letter-spacing:0.458px;">Actualización de</span>
<span class="t" style="left:26.75px;top:954.58px;font-size:14.20px;line-height:20px;color:#7f838e;-webkit-text-stroke:0.12px #7f838e;letter-spacing:0.445px;">cuenta bancaria</span>
<svg style="left:0;top:160px" width="230" height="814" viewBox="0 160 230 814"><path d="M18.85 173.9L26.9 180.8V181.7H24.9V187.9H20.5V184Q20.5 183.3 19.8 183.3H17.9Q17.2 183.3 17.2 184V187.9H12.8V181.7H10.8V180.8Z" fill="#7f838e"/><circle cx="23.3" cy="233.9" r="2.85" fill="#7f838e"/><circle cx="17" cy="233.4" r="4.1" fill="#fff"/><circle cx="17" cy="233.4" r="3.4" fill="#7f838e"/><path d="M10.9 243.8C10.9 236.5 22.9 236.5 22.9 243.8Z" fill="#7f838e"/><path d="M24.3 243.8C24.3 241.3 23.6 239.6 22.2 238.5C25.6 237.7 28.4 239.8 28.4 243.8Z" fill="#7f838e"/><path d="M18 286.7L24.5 289.4V296L18 298.8L11.5 296V289.4Z" fill="#fff" stroke="#7f838e" stroke-width="1.4" stroke-linejoin="round"/><path d="M11.5 289.4L18 292.2V298.8L11.5 296Z" fill="#7f838e"/><path d="M11.5 289.4L18 286.7L24.5 289.4L18 292.2Z" fill="#7f838e"/><path d="M18.4 292.6L24 290.2V295.7L18.4 298.1Z" fill="#fff"/><circle cx="17.7" cy="347.5" r="5.7" fill="#7f838e"/><path d="M11.2 351.8H13.2L14.6 353.6H20.8L22.2 351.8H24.9V355.8H11.2Z" fill="#7f838e"/><text x="17.7" y="350.3" font-size="7.4" font-weight="bold" text-anchor="middle" fill="#fff" font-family="Liberation Sans">S</text><path d="M11.4 402.3H22.4M19.3 399.2L22.5 402.3L19.3 405.4M22.5 407.4H11.5M14.6 404.4L11.4 407.4L14.6 410.5" stroke="#7f838e" stroke-width="1.35" fill="none" stroke-linecap="round" stroke-linejoin="round"/><circle cx="18" cy="460.9" r="5.2" fill="#7f838e"/><rect x="15.80" y="453.90" width="4.4" height="4" rx="0.9" transform="rotate(0 18 460.9)" fill="#7f838e"/><rect x="15.80" y="453.90" width="4.4" height="4" rx="0.9" transform="rotate(60 18 460.9)" fill="#7f838e"/><rect x="15.80" y="453.90" width="4.4" height="4" rx="0.9" transform="rotate(120 18 460.9)" fill="#7f838e"/><rect x="15.80" y="453.90" width="4.4" height="4" rx="0.9" transform="rotate(180 18 460.9)" fill="#7f838e"/><rect x="15.80" y="453.90" width="4.4" height="4" rx="0.9" transform="rotate(240 18 460.9)" fill="#7f838e"/><rect x="15.80" y="453.90" width="4.4" height="4" rx="0.9" transform="rotate(300 18 460.9)" fill="#7f838e"/><circle cx="18" cy="460.9" r="2.15" fill="#fff"/><path d="M21 512.3L11.5 521.6" stroke="#7f838e" stroke-width="1.6" stroke-linecap="round"/><circle cx="12.7" cy="513.3" r="1.55" fill="#7f838e"/><circle cx="19.9" cy="520.5" r="1.55" fill="#7f838e"/><path d="M15.5 579.30V577.40Q15.5 576.50 16.4 576.50H19.6Q20.5 576.50 20.5 577.40V579.30" stroke="#7f838e" stroke-width="1.15" fill="none" opacity="0.85"/><path d="M11.05 582.90V580.50Q11.05 579.10 12.5 579.10H23.45Q24.9 579.10 24.9 580.50V582.90Z" fill="#7f838e"/><path d="M11.05 584.10H15.8V585.00Q15.8 586.00 16.8 586.00H19.2Q20.2 586.00 20.2 585.00V584.10H24.9V587.55Q24.9 589.05 23.4 589.05H12.55Q11.05 589.05 11.05 587.55Z" fill="#7f838e"/><path d="M15.5 663.20V661.30Q15.5 660.40 16.4 660.40H19.6Q20.5 660.40 20.5 661.30V663.20" stroke="#7f838e" stroke-width="1.15" fill="none" opacity="0.85"/><path d="M11.05 666.80V664.40Q11.05 663.00 12.5 663.00H23.45Q24.9 663.00 24.9 664.40V666.80Z" fill="#7f838e"/><path d="M11.05 668.00H15.8V668.90Q15.8 669.90 16.8 669.90H19.2Q20.2 669.90 20.2 668.90V668.00H24.9V671.45Q24.9 672.95 23.4 672.95H12.55Q11.05 672.95 11.05 671.45Z" fill="#7f838e"/><path d="M195.4 580.7L200.05 585.3L204.7 580.7M195.4 664.6L200.05 669.2L204.7 664.6" stroke="#6f737e" stroke-width="1.5" fill="none" stroke-linecap="round" stroke-linejoin="round"/><path d="M195.1 753.5L200.2 748.4L205.3 753.5" stroke="#fff" stroke-width="1.7" fill="none" stroke-linecap="round" stroke-linejoin="round"/><path d="M12.3 743.9H17.6L21.5 747.8V749.6A4.9 4.9 0 0 0 19.4 757.9H12.3Q11.1 757.9 11.1 756.7V745.1Q11.1 743.9 12.3 743.9Z" fill="#fff"/><path d="M17.9 744.2V747.5H21.2Z" fill="#c9c9c9"/><circle cx="22.9" cy="754" r="3.9" fill="#fff"/><path d="M21.1 754.1L22.4 755.4L24.8 752.7" stroke="#424241" stroke-width="1" fill="none" stroke-linecap="round" stroke-linejoin="round"/><path d="M32.8 801H41M32.8 805.2H41M32.8 809.5H41" stroke="#3d4150" stroke-width="1.6" stroke-linecap="round"/><path d="M27.3 800.7L28.4 801.8L30.5 799.5M27.3 804.9L28.4 806L30.5 803.7M27.3 809.2L28.4 810.3L30.5 808" stroke="#3d4150" stroke-width="1.3" fill="none" stroke-linecap="round" stroke-linejoin="round"/><path d="M30 865.6V859.6Q30 858.5 31.1 858.5H40.4V860.4" stroke="#7f838e" stroke-width="1.4" fill="none"/><path d="M27.2 866.2H35.8V868.6H28.6Q27.2 868.6 27.2 867.2Z" fill="#7f838e"/><path d="M37.6 861.6H41.6L44.6 864.6V870.9Q44.6 871.9 43.6 871.9H37.6Q36.6 871.9 36.6 870.9V862.6Q36.6 861.6 37.6 861.6Z" fill="#7f838e"/><path d="M41.9 861.5V864.3H44.7Z" fill="#fff"/><path d="M34.15 937.6L41 940.6V942.2H27.3V940.6Z" fill="#7f838e"/><circle cx="34.15" cy="940.3" r="0.85" fill="#fff"/><path d="M29.5 943V949M32.6 943V949M35.7 943V949M38.8 943V949" stroke="#7f838e" stroke-width="1.5"/><path d="M28.3 949.1H40V950.3H28.3ZM27.2 950.8H41.1V952H27.2Z" fill="#7f838e"/></svg>
<svg style="left:241px;top:35px" width="1619" height="240" viewBox="241 35 1619 240"><path d="M1799.6 74.9C1800.6 72.4 1800.9 70.8 1800.9 69.2C1800.9 66.5 1802.6 64.8 1805 64.8C1807.4 64.8 1809.1 66.5 1809.1 69.2C1809.1 70.8 1809.4 72.4 1810.4 74.9" fill="none" stroke="#1c1c1c" stroke-width="1.45"/><path d="M1798.9 75.2H1811.2" stroke="#1c1c1c" stroke-width="1.6" stroke-linecap="round"/><path d="M1805 63.4V65" stroke="#1c1c1c" stroke-width="1.5" stroke-linecap="round"/><path d="M1803 77.3H1807.1Q1806.6 79.1 1805.05 79.1Q1803.5 79.1 1803 77.3Z" fill="#1c1c1c"/><circle cx="1852.9" cy="71" r="8.05" fill="#3a3a3a"/><g stroke="#fff" fill="none"><ellipse cx="1852.9" cy="71" rx="3.5" ry="8.6" stroke-width="1.15"/><path d="M1843 68.9H1863M1843 73.5H1863" stroke-width="1.35"/></g><circle cx="339.6" cy="238.5" r="4.4" fill="none" stroke="#555" stroke-width="1.7"/><path d="M342.9 241.8L347 245" stroke="#555" stroke-width="1.9" stroke-linecap="round"/><circle cx="560.0" cy="236.2" r="3.2" fill="#5e5e5e"/><path d="M553.7 246.8C553.7 239.4 566.3 239.4 566.3 246.8Z" fill="#5e5e5e"/><circle cx="726.2" cy="236.2" r="3.2" fill="#5e5e5e"/><path d="M719.9 246.8C719.9 239.4 732.5 239.4 732.5 246.8Z" fill="#5e5e5e"/><path d="M664.3 238.8H671.6L667.95 242.9Z" fill="#555" stroke="#555" stroke-width="0.9" stroke-linejoin="round"/><path d="M834.4 238.8H841.7L838.05 242.9Z" fill="#555" stroke="#555" stroke-width="0.9" stroke-linejoin="round"/></svg>
</body>
</html>
